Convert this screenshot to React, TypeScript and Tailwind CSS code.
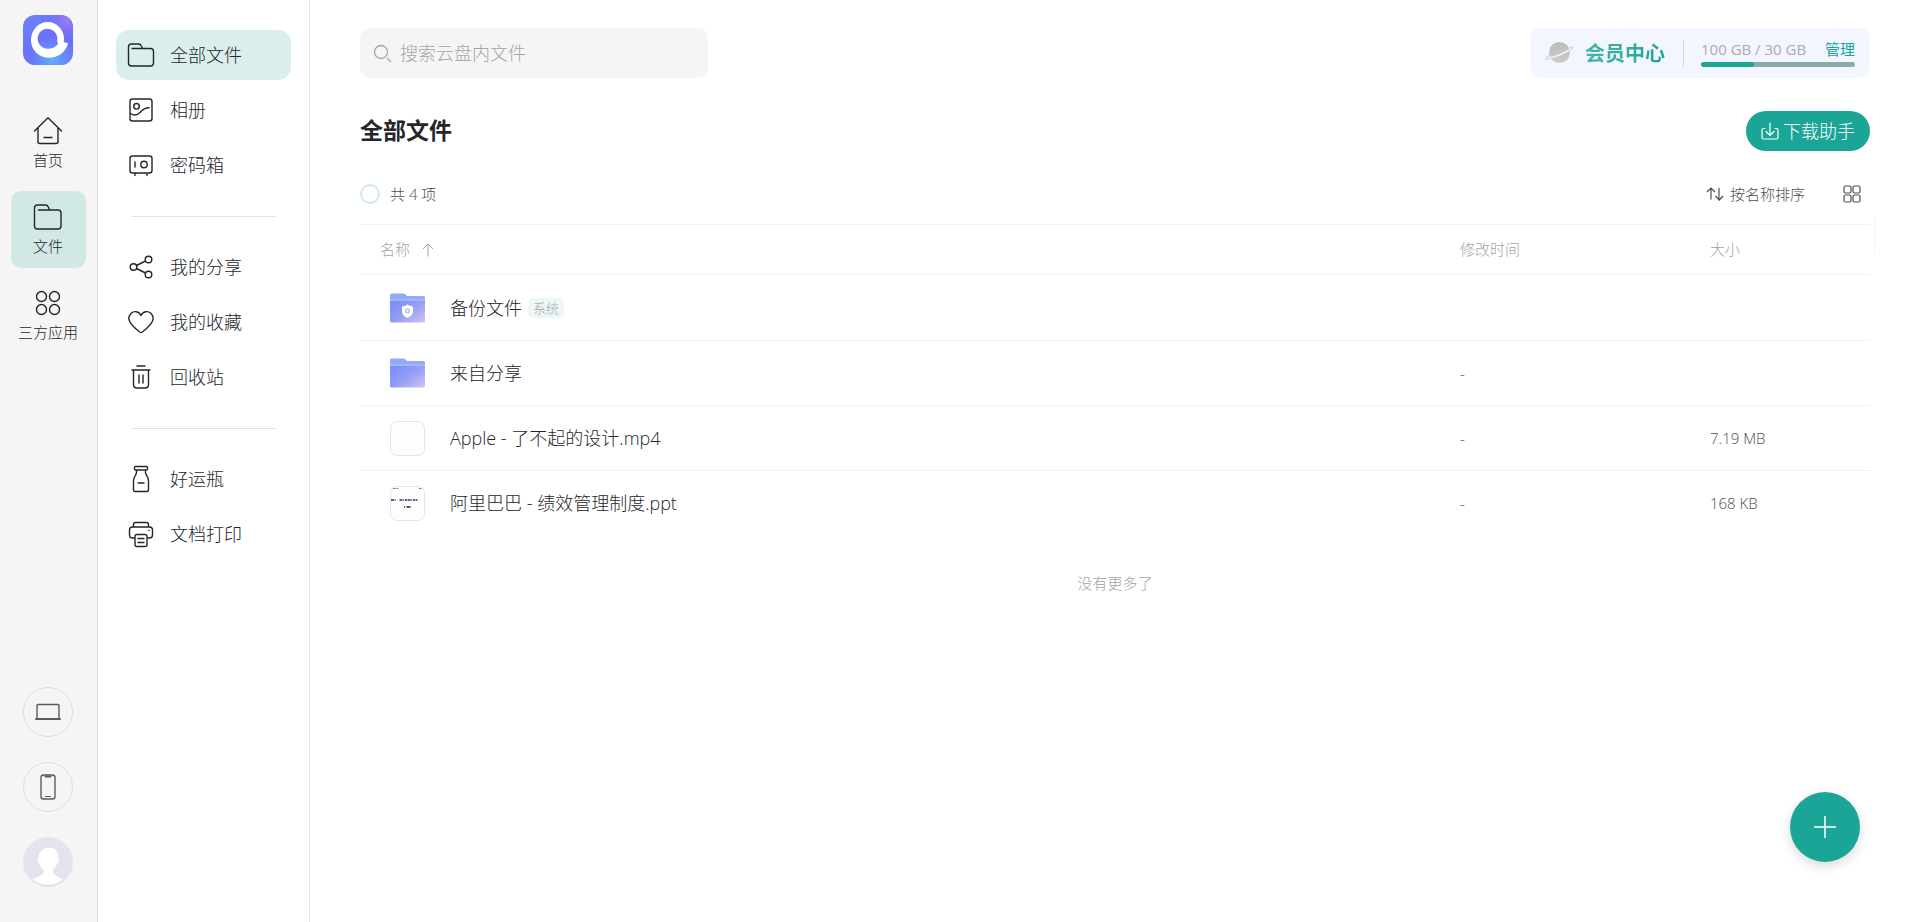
import type { ReactNode } from "react";

type IconProps = { children: ReactNode; size?: string };

function Icon({ children, size = "size-[30px]" }: IconProps) {
  return (
    <svg viewBox="0 0 30 30" className={`${size} shrink-0`} fill="none" stroke="currentColor" strokeWidth="1.4" strokeLinecap="round" strokeLinejoin="round" aria-hidden="true">
      {children}
    </svg>
  );
}

const HomeIcon = () => (
  <Icon>
    <path d="M1.5 15 15 1.8 28.5 15M5 12v13.500q0 2 2 2h16q2 0 2-2V12M11 21.500h8" />
  </Icon>
);

const FolderIcon = () => (
  <Icon>
    <path d="M5.500 8h19.500q3 0 3 3v13q0 3-3 3H4.500q-3 0-3-3V6q0-3 3-3H12.500q2 0 2.800 2l1.500 3" />
  </Icon>
);

const AppsIcon = () => (
  <Icon>
    <circle cx="8.500" cy="8.500" r="5" />
    <circle cx="21.500" cy="8.500" r="5" />
    <circle cx="8.500" cy="21.500" r="5" />
    <circle cx="21.500" cy="21.500" r="5" />
  </Icon>
);

const NavFolderIcon = () => (
  <Icon>
    <path d="M6 8.500h18.500q3 0 3 3v11.500q0 3-3 3h-19q-3 0-3-3V7q0-3 3-3H12.500q2 0 2.800 2l1.200 2.500" />
  </Icon>
);

const AlbumIcon = () => (
  <Icon>
    <rect x="4" y="4" width="22" height="22" rx="2.500" />
    <circle cx="10.500" cy="11.300" r="2.800" />
    <path d="M4.500 18.500c3.500 2.200 7 1.500 9.500-1s3.500-4.800 9-4.800" />
  </Icon>
);

const SafeIcon = () => (
  <Icon>
    <rect x="4" y="6" width="22" height="17" rx="2.500" />
    <circle cx="18" cy="14.500" r="3.200" />
    <path d="M9 12v5M9 23.500V25.500M21 23.500V25.500" />
  </Icon>
);

const ShareIcon = () => (
  <Icon>
    <circle cx="7.500" cy="15" r="3.300" />
    <circle cx="22.500" cy="7.500" r="3.300" />
    <circle cx="22.500" cy="22.500" r="3.300" />
    <path d="m10.500 13.500 9-4.500M10.500 16.500l9 4.500" />
  </Icon>
);

const HeartIcon = () => (
  <Icon>
    <path d="M15 8.500C12.800 4 8 3.700 5.200 6.300c-2.700 2.700-2.800 6.500-.9 9.400C6.500 19 11 23 14 25.300q1 .7 2 0c3-2.300 7.500-6.300 9.700-9.600 1.900-2.900 1.800-6.700-.9-9.400C22 3.700 17.200 4 15 8.500Z" />
  </Icon>
);

const TrashIcon = () => (
  <Icon>
    <path d="M11 4h8M6 8h18M7.500 8V22.500q0 3.500 3.500 3.500h8q3.500 0 3.500-3.500V8M13 13v8M17 13v8" />
  </Icon>
);

const BottleIcon = () => (
  <Icon>
    <rect x="8.500" y="2.500" width="13" height="3.500" rx="1" />
    <path d="M10.500 6.500v2c0 2.500-3 4-3 8v9.500q0 1.500 1.500 1.500h12q1.500 0 1.500-1.500v-9.500c0-4-3-5.500-3-8v-2M12 19h6" />
  </Icon>
);

const PrinterIcon = () => (
  <Icon>
    <path d="M7.500 8V5.500q0-2 2-2h11q2 0 2 2V8M8.500 19H6.500q-3 0-3-3v-5q0-3 3-3h17q3 0 3 3v5q0 3-3 3h-2" />
    <rect x="9" y="15.500" width="12" height="12" rx="2" />
    <path d="M12 19.500h6M12 23.500h6M23 11.500h.1" />
  </Icon>
);

const Logo = () => (
  <svg viewBox="0 0 50 50" className="size-[50px]" role="img" aria-label="云盘">
    <defs>
      <linearGradient id="logo-bg" x1="0" y1="0" x2="1" y2="1">
        <stop offset="0" stopColor="#6b84fd" />
        <stop offset=".55" stopColor="#6a6ef8" />
        <stop offset="1" stopColor="#6b72f8" />
      </linearGradient>
      <radialGradient id="logo-blue" cx=".58" cy=".9" r=".5">
        <stop offset="0" stopColor="#62b0fc" />
        <stop offset="1" stopColor="#62a0fb" stopOpacity="0" />
      </radialGradient>
      <radialGradient id="logo-purple" cx=".9" cy=".1" r=".4">
        <stop offset="0" stopColor="#9a80f0" />
        <stop offset="1" stopColor="#8b70f4" stopOpacity="0" />
      </radialGradient>
    </defs>
    <rect width="50" height="50" rx="12" fill="url(#logo-bg)" />
    <rect width="50" height="50" rx="12" fill="url(#logo-blue)" />
    <rect width="50" height="50" rx="12" fill="url(#logo-purple)" />
    <path fill="#fff" d="M24.500 7C33.500 7 41 14.500 41 23.500q0 2-.5 3.500l4.500 1.200C43 37 35 42.800 26 42.800 16 42.800 8 35 8 25.200 8 15 15.500 7 24.500 7Zm-.2 6.700c-5.500 0-9.600 4.500-9.600 10.100 0 5.700 4.600 9.900 10.300 9.900 4.300 0 8-1.700 10-4.700l-1-3.500q.5-1.500.3-3c-.6-5.200-4.800-8.800-10-8.800Z" />
  </svg>
);

const Planet = () => (
  <svg viewBox="0 0 30 24" className="h-6 w-[30px]" aria-hidden="true">
    <defs>
      <linearGradient id="planet" x1="0" y1="0" x2="0" y2="1">
        <stop offset="0" stopColor="#bdbdbd" />
        <stop offset="1" stopColor="#cacaca" />
      </linearGradient>
    </defs>
    <circle cx="15.500" cy="11.500" r="10.500" fill="url(#planet)" />
    <path d="M5 14.500c-2.500 1.500-4 3-3 3.500 4 .500 24-7.500 26.500-11 .500-1-1-1-3-.500" fill="none" stroke="#d2d2d2" strokeWidth="1.200" />
    <path d="M4.500 17c6-1 15-4.500 21.500-8.500" fill="none" stroke="#f0f0f3" strokeWidth="1.500" />
  </svg>
);

const FolderArt = ({ shield }: { shield?: boolean }) => (
  <svg viewBox="0 0 35 30" className="h-[30px] w-[35px]" aria-hidden="true">
    <defs>
      <linearGradient id="folder-front" x1="0" y1="0.100" x2="1" y2="1">
        <stop offset="0" stopColor="#788cfb" />
        <stop offset=".5" stopColor="#979ff6" />
        <stop offset="1" stopColor="#d0c4ec" />
      </linearGradient>
    </defs>
    <path d="M0 2q0-1.500 1.500-1.500h12q1 0 2 1l1.500 1.500h16.500q1.500 0 1.500 1.500V12H0Z" fill="#93aafb" />
    <path d="M0 6h35v2H0Z" fill="#a5b5fc" />
    <path d="M0 8h35v20q0 1.500-1.500 1.500h-32Q0 29.500 0 28Z" fill="url(#folder-front)" />
    {shield && (
      <>
        <path d="M17.500 11.500q3 2 5.500 2v5q0 4-5.500 6.500-5.500-2.500-5.500-6.500v-5q2.500 0 5.500-2Z" fill="#fff" />
        <circle cx="17.500" cy="17.800" r="1.800" fill="none" stroke="#8e97f4" strokeWidth="1" />
        <path d="m18.500 19.200 1 .8" stroke="#8e97f4" />
      </>
    )}
  </svg>
);

const SlideThumb = () => (
  <svg viewBox="0 0 33 33" className="size-full" aria-hidden="true">
    <path d="M1 1.500h3" stroke="#8a6d52" />
    <path d="M4 1.500h4" stroke="#f0a050" strokeWidth="1.200" />
    <path d="M28 1.500h4" stroke="#777" strokeDasharray="2 .5" />
    <path d="M0 13h5M8.500 13h18" stroke="#2d2f78" strokeWidth="1.400" strokeDasharray="3 .7 1 .8 2 .6" />
    <path d="M13 20h7" stroke="#222" strokeWidth="1.500" strokeDasharray="1 1.500 4 1" />
  </svg>
);

const railItems = [
  { label: "首页", icon: <HomeIcon /> },
  { label: "文件", icon: <FolderIcon />, active: true },
  { label: "三方应用", icon: <AppsIcon /> },
];

const navGroups = [
  [
    { label: "全部文件", icon: <NavFolderIcon />, active: true },
    { label: "相册", icon: <AlbumIcon /> },
    { label: "密码箱", icon: <SafeIcon /> },
  ],
  [
    { label: "我的分享", icon: <ShareIcon /> },
    { label: "我的收藏", icon: <HeartIcon /> },
    { label: "回收站", icon: <TrashIcon /> },
  ],
  [
    { label: "好运瓶", icon: <BottleIcon /> },
    { label: "文档打印", icon: <PrinterIcon /> },
  ],
];

const files = [
  { name: "备份文件", kind: "backup", tag: "系统", modified: "", size: "" },
  { name: "来自分享", kind: "folder", modified: "-", size: "" },
  { name: "Apple - 了不起的设计.mp4", kind: "video", modified: "-", size: "7.19 MB" },
  { name: "阿里巴巴 - 绩效管理制度.ppt", kind: "slides", modified: "-", size: "168 KB" },
];

function Rail() {
  return (
    <aside className="flex w-[98px] shrink-0 flex-col items-center border-r border-[#d9d9dc] bg-[#f5f5f5] pt-[15px] pr-px pb-[35px]">
      <Logo />
      <nav className="mt-10 flex flex-col gap-[9px]">
        {railItems.map((item) => (
          <a key={item.label} href="#" className={`flex h-[77px] w-[75px] flex-col items-center justify-center rounded-[10px] pb-0.5 text-[15px] leading-5 ${item.active ? "bg-[#d2e8e5]" : ""}`}>
            {item.icon}
            <span className="mt-1 whitespace-nowrap">{item.label}</span>
          </a>
        ))}
      </nav>
      <div className="mt-auto flex flex-col gap-[25px]">
        <button aria-label="电脑客户端" className="flex size-[50px] items-center justify-center rounded-full border border-[#c8e6e3] text-[#5b5c62]">
          <Icon>
            <rect x="4" y="7.500" width="22" height="14.500" rx="1" />
            <path d="M3 22h24" strokeWidth="2" />
          </Icon>
        </button>
        <button aria-label="手机客户端" className="flex size-[50px] items-center justify-center rounded-full border border-[#c8e6e3] text-[#5b5c62]">
          <Icon>
            <rect x="8" y="3" width="14" height="24" rx="2.500" />
            <path d="M12.500 4.500h5" strokeWidth="2" />
            <path d="M12.500 24.500h5" strokeWidth="1" />
          </Icon>
        </button>
        <button aria-label="个人中心" className="size-[50px] overflow-hidden rounded-full bg-[#e2e5ed]">
          <svg viewBox="0 0 50 50" className="size-full" aria-hidden="true">
            <path fill="#fff" d="M26 10.500c6 0 9.500 4 9.300 10.500q1 1 .5 3.200t-1.500 2.500c-1 3-4.300 5-4.300 7.800 0 4 5 5.500 9.800 7.500-4 4-9 5.700-14.800 5.700s-11-1.700-15-5.700c5-2 10.800-3.500 10.800-7.500 0-2.300-3.800-4.800-4.500-7.800-1.500-.5-2-5-.8-5.700 0-6 4.500-10 10.500-10.500Z" />
          </svg>
        </button>
      </div>
    </aside>
  );
}

function Sidebar() {
  return (
    <aside className="w-[212px] shrink-0 border-r border-[#e2e2e5] px-[18px] pt-[30px]">
      {navGroups.map((group, i) => (
        <nav key={i} className="flex flex-col gap-[5px]">
          {i > 0 && <hr className="mx-[15px] mt-[26px] mb-5 border-[#cdebe7]" />}
          {group.map((item) => (
            <a key={item.label} href="#" className={`flex h-[50px] items-center gap-[14px] rounded-[13px] pl-[10px] text-lg ${item.active ? "bg-[#daefed]" : ""}`}>
              {item.icon}
              {item.label}
            </a>
          ))}
        </nav>
      ))}
    </aside>
  );
}

function MemberCard() {
  return (
    <div className="flex h-[50px] w-[340px] items-center rounded-[10px] bg-[#f3f5ff] pr-[15px] pl-[14px]">
      <a href="#" className="flex items-center gap-[11px]">
        <Planet />
        <span className="bg-linear-to-r from-[#46b5a9] to-[#1aa596] bg-clip-text pt-0.5 text-xl font-bold text-transparent">会员中心</span>
      </a>
      <div className="ml-[18px] h-[27px] w-px bg-[#bfdfe1]" />
      <div className="ml-[17px] flex-1">
        <div className="flex justify-between text-[15px] leading-[18px] font-normal whitespace-nowrap">
          <span className="text-[#a9abb3]">100 GB / 30 GB</span>
          <a href="#" className="text-[#1aa596]">管理</a>
        </div>
        <div className="mt-1 h-[5px] overflow-hidden rounded-full bg-[#8ca9ac]">
          <div className="h-full w-[53px] rounded-full bg-[#1aa596]" />
        </div>
      </div>
    </div>
  );
}

function FileIcon({ kind }: { kind: string }) {
  if (kind === "backup") return <FolderArt shield />;
  if (kind === "folder") return <FolderArt />;
  return (
    <div className="size-[35px] overflow-hidden rounded-[7px] border border-[#d3efec] bg-[#fdfdff]">
      {kind === "slides" && <SlideThumb />}
    </div>
  );
}

function FileTable() {
  return (
    <table className="w-full table-fixed border-collapse text-left">
      <thead>
        <tr className="h-[50px] border-y border-[#eaf6f4] text-[15px] text-[#a3a3a6]">
          <th className="pl-5 font-light">
            <span className="flex items-center gap-3">
              名称
              <svg viewBox="0 0 12 14" className="h-3.5 w-3" fill="none" stroke="currentColor" aria-hidden="true">
                <path d="M6 13.500V1M1 6l5-5 5 5" />
              </svg>
            </span>
          </th>
          <th className="w-[250px] font-light">修改时间</th>
          <th className="w-[160px] font-light">大小</th>
        </tr>
      </thead>
      <tbody>
        {files.map((file) => (
          <tr key={file.name} className="h-[65px] border-b border-[#eaf6f4] first:h-[66px] last:border-b-0">
            <td className="pl-[30px]">
              <div className="flex items-center">
                <FileIcon kind={file.kind} />
                <span className="ml-[25px] text-lg">{file.name}</span>
                {file.tag && (
                  <span className="ml-1.5 rounded-[5px] bg-[#eef7f6] px-[5px] text-[13px] leading-5 text-[#a3a8aa]">{file.tag}</span>
                )}
              </div>
            </td>
            <td className="text-[15px] text-[#4d4e54]">{file.modified}</td>
            <td className="text-[15px] text-[#4d4e54]">{file.size}</td>
          </tr>
        ))}
      </tbody>
    </table>
  );
}

export default function App() {
  return (
    <div className="flex min-h-screen bg-white font-['Open_Sans','Noto_Sans_CJK_SC',sans-serif] font-light text-[#25262b]">
      <Rail />
      <Sidebar />
      <main className="min-w-0 flex-1 px-[50px] pt-7">
        <header className="flex items-center justify-between">
          <label className="flex h-[50px] w-[348px] items-center gap-2 rounded-[10px] bg-[#f5f5f5] px-[13px] text-[#a5a5a8]">
            <svg viewBox="0 0 19 19" className="size-[19px] shrink-0" fill="none" stroke="currentColor" strokeWidth="1.300" aria-hidden="true">
              <circle cx="8" cy="8" r="6.500" />
              <path d="m14 14 4 4" />
            </svg>
            <input type="search" aria-label="搜索" placeholder="搜索云盘内文件" className="w-full bg-transparent text-lg outline-none placeholder:text-[#a5a5a8]" />
          </label>
          <MemberCard />
        </header>

        <div className="mt-8 flex items-center justify-between">
          <h1 className="pb-0.5 text-[23px] leading-10 font-bold">全部文件</h1>
          <button className="flex h-10 w-[124px] items-center justify-center gap-1 rounded-full bg-[#1aa596] text-lg font-light whitespace-nowrap text-white">
            <svg viewBox="0 0 18 18" className="size-[18px]" fill="none" stroke="currentColor" strokeWidth="1.200" strokeLinecap="round" strokeLinejoin="round" aria-hidden="true">
              <path d="M9 1v12M5 9.500l4 4 4-4M4 6.500H2.500Q1 6.500 1 8v7.500q0 1.500 1.500 1.500h13q1.500 0 1.500-1.500V8q0-1.500-1.500-1.500H14" />
            </svg>
            下载助手
          </button>
        </div>

        <div className="mt-[30px] flex items-center justify-between text-[15px] leading-6 text-[#4d4e54]">
          <label className="flex items-center gap-[10px]">
            <input type="checkbox" className="size-5 appearance-none rounded-full border-2 border-[#cdece8]" />
            共 4 项
          </label>
          <div className="flex items-center pr-[9px]">
            <button className="flex items-center gap-[6px]">
              <svg viewBox="0 0 18 14" className="h-3.5 w-[18px]" fill="none" stroke="currentColor" strokeWidth="1.200" aria-hidden="true">
                <path d="M5 12.500V1.200M1 5l4-4 4 4M13 1v11.800M9.500 9l3.700 4L17 9" />
              </svg>
              按名称排序
            </button>
            <button aria-label="网格视图" className="ml-[38px]">
              <svg viewBox="0 0 18 18" className="size-[18px]" fill="none" stroke="currentColor" strokeWidth="1.200" aria-hidden="true">
                <rect x="1" y="1" width="7" height="7" rx="1.500" />
                <rect x="10" y="1" width="7" height="7" rx="1.500" />
                <rect x="1" y="10" width="7" height="7" rx="1.500" />
                <rect x="10" y="10" width="7" height="7" rx="1.500" />
              </svg>
            </button>
          </div>
        </div>

        <div className="relative mt-[18px]">
          <FileTable />
          <div className="absolute -top-2 -right-[5px] h-9 w-px bg-[#f0f0ff]" />
        </div>
        <p className="py-[35px] text-center text-[15px] leading-6 text-[#a3a3a6]">没有更多了</p>
      </main>

      <button aria-label="新建" className="fixed right-[60px] bottom-[60px] flex size-[70px] items-center justify-center rounded-full bg-[#1aa596] text-white shadow-[0_4px_12px_rgba(0,0,0,0.15)]">
        <svg viewBox="0 0 22 22" className="size-[22px]" stroke="currentColor" strokeWidth="1.500" aria-hidden="true">
          <path d="M11 0v22M0 11h22" />
        </svg>
      </button>
    </div>
  );
}
